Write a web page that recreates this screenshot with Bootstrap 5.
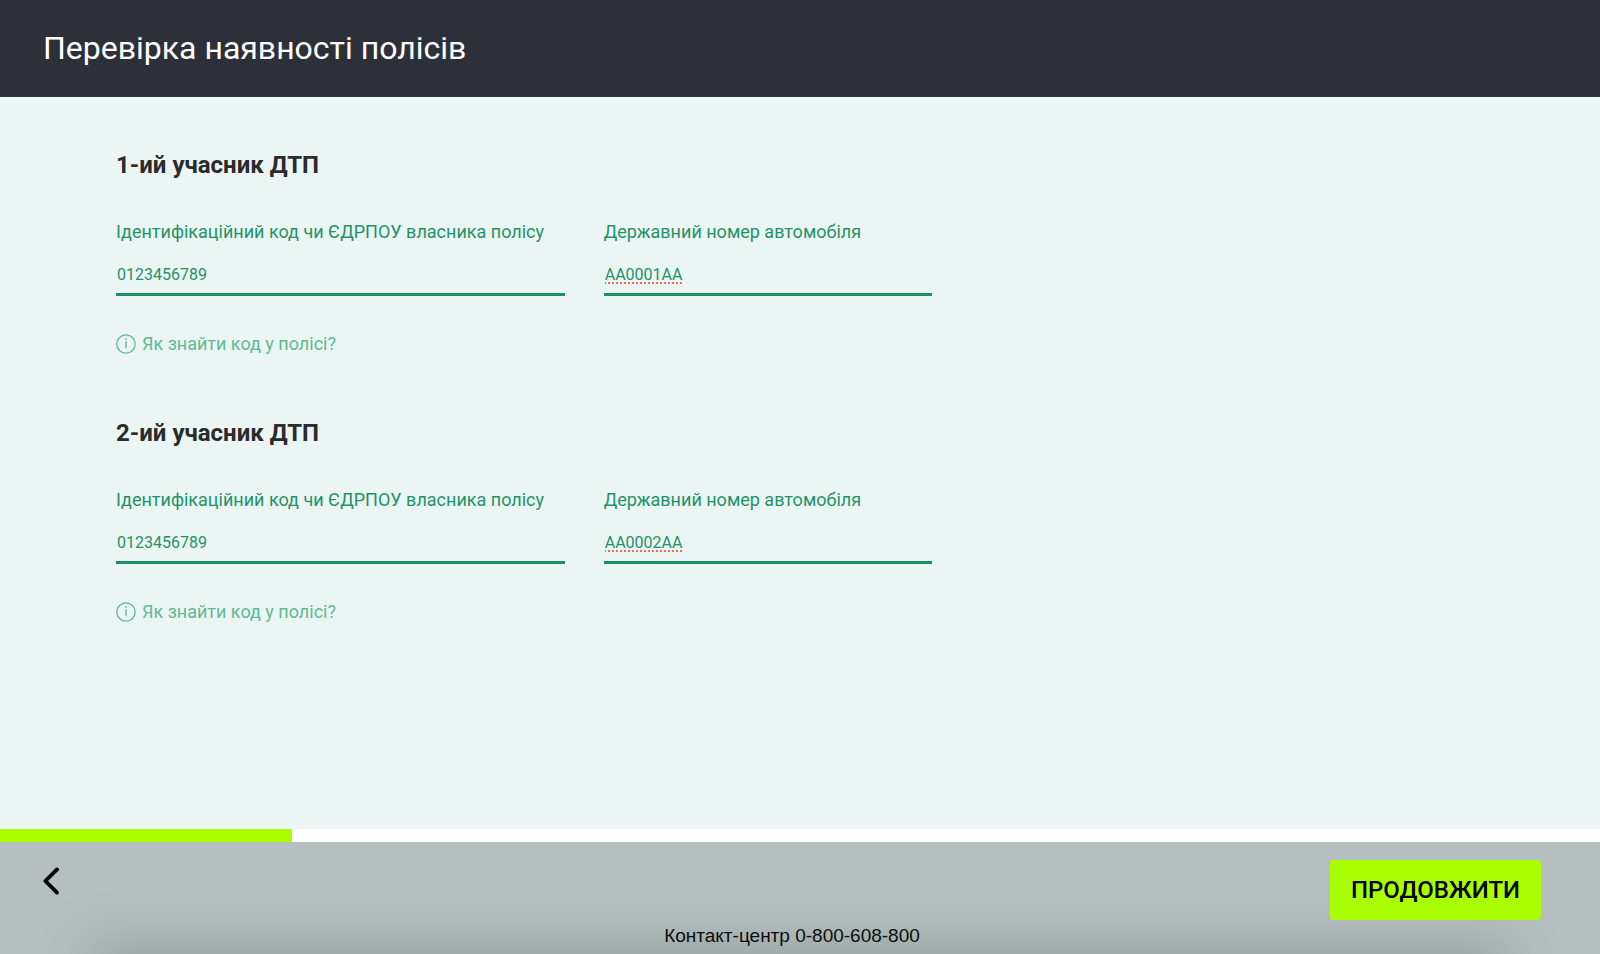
<!DOCTYPE html>
<html lang="uk">
<head>
<meta charset="utf-8">
<meta name="viewport" content="width=device-width, initial-scale=1">
<title>Перевірка наявності полісів</title>
<link href="https://cdn.jsdelivr.net/npm/bootstrap@5.3.0/dist/css/bootstrap.min.css" rel="stylesheet">
<style>
  body { font-family: Roboto, sans-serif; background: #ebf5f4; color: #2b2b2b; }
  .page-header { background: #2e3039; padding: 24px 43px 25px; }
  .page-header h1 { font-size: 32px; line-height: 48px; font-weight: 400; }
  .page-main { padding: 52px 116px 0; }
  .party { margin-bottom: 61px; }
  .party h2 { font-size: 24px; line-height: 32px; font-weight: 700; margin-bottom: 39px; }
  .party-fields { display: grid; grid-template-columns: 56fr 41fr 64fr; column-gap: 39px; }
  .party-fields label { font-size: 18px; line-height: 24px; color: #1f9368; margin-bottom: 11px; }
  .line-input, .line-input:focus {
    height: 41px; padding: 0 1px; font-size: 16px; color: #1f9368;
    background: transparent; border: 0; border-bottom: 3px solid #1b8f66; border-radius: 0; box-shadow: none;
  }
  .plate { text-decoration: underline dotted #ee6a5c 2px; text-underline-offset: 3px; }
  .help { margin-top: 36px; font-size: 18px; line-height: 24px; color: #5fba95; gap: 6px; }
  .steps { height: 13px; border-radius: 0; background: #fff; }
  .steps .progress-bar { background: #a9ff00; }
  .page-footer { background: #b5bfbf; padding: 18px 59px 6px 38px; }
  .page-footer::after {
    content: ""; position: absolute; left: 100px; right: 100px; bottom: -24px; height: 20px;
    box-shadow: 0 0 50px 6px rgba(90, 100, 96, .5);
  }
  .back { color: #000; padding: 7px 4px; line-height: 0; }
  .go, .go:hover { background: #a9ff00; color: #000; border: 0; border-radius: 4px; padding: 14px 21px; font-size: 24px; line-height: 32px; font-weight: 500; z-index: 1; }
  .contact { font: 19px/24px "Liberation Sans", sans-serif; color: #0b0d0d; margin-right: -5px; z-index: 1; }
</style>
</head>
<body class="min-vh-100 d-flex flex-column">
<header class="page-header">
  <h1 class="text-white mb-0">Перевірка наявності полісів</h1>
</header>

<main class="page-main flex-grow-1">
  <section class="party">
    <h2>1-ий учасник ДТП</h2>
    <div class="party-fields">
      <div>
        <label class="d-block text-nowrap" for="code1">Ідентифікаційний код чи ЄДРПОУ власника полісу</label>
        <input class="form-control line-input" id="code1" type="text" value="0123456789">
      </div>
      <div>
        <label class="d-block text-nowrap" for="plate1">Державний номер автомобіля</label>
        <input class="form-control line-input plate" id="plate1" type="text" value="АА0001АА">
      </div>
    </div>
    <a class="help d-inline-flex align-items-center text-decoration-none align-top" href="#">
      <svg width="20" height="20" viewBox="0 0 20 20" fill="none" stroke="currentColor" aria-hidden="true"><circle cx="10" cy="10" r="9.2" stroke-width="1.3"/><path d="M10 7.3v6.9" stroke-width="1.4"/><circle cx="10" cy="5" r=".9" fill="currentColor" stroke="none"/></svg>
      <span>Як знайти код у полісі?</span>
    </a>
  </section>

  <section class="party">
    <h2>2-ий учасник ДТП</h2>
    <div class="party-fields">
      <div>
        <label class="d-block text-nowrap" for="code2">Ідентифікаційний код чи ЄДРПОУ власника полісу</label>
        <input class="form-control line-input" id="code2" type="text" value="0123456789">
      </div>
      <div>
        <label class="d-block text-nowrap" for="plate2">Державний номер автомобіля</label>
        <input class="form-control line-input plate" id="plate2" type="text" value="АА0002АА">
      </div>
    </div>
    <a class="help d-inline-flex align-items-center text-decoration-none align-top" href="#">
      <svg width="20" height="20" viewBox="0 0 20 20" fill="none" stroke="currentColor" aria-hidden="true"><circle cx="10" cy="10" r="9.2" stroke-width="1.3"/><path d="M10 7.3v6.9" stroke-width="1.4"/><circle cx="10" cy="5" r=".9" fill="currentColor" stroke="none"/></svg>
      <span>Як знайти код у полісі?</span>
    </a>
  </section>
</main>

<div class="progress steps" role="progressbar" aria-label="Крок" aria-valuenow="18" aria-valuemin="0" aria-valuemax="100">
  <div class="progress-bar" style="width: 18.25%"></div>
</div>
<footer class="page-footer position-relative overflow-hidden">
  <div class="d-flex justify-content-between align-items-start">
    <button class="btn back border-0" type="button" aria-label="Назад">
      <svg width="18" height="28" viewBox="0 0 18 28" fill="none" stroke="#000" stroke-width="3.8" stroke-linecap="round" stroke-linejoin="round" aria-hidden="true"><path d="M15 2.4 3.4 14 15 25.6"/></svg>
    </button>
    <button class="btn go position-relative" type="button">ПРОДОВЖИТИ</button>
  </div>
  <p class="contact text-center position-relative mb-0 mt-1">Контакт-центр 0-800-608-800</p>
</footer>
<script src="https://cdn.jsdelivr.net/npm/bootstrap@5.3.0/dist/js/bootstrap.bundle.min.js"></script>
</body>
</html>
